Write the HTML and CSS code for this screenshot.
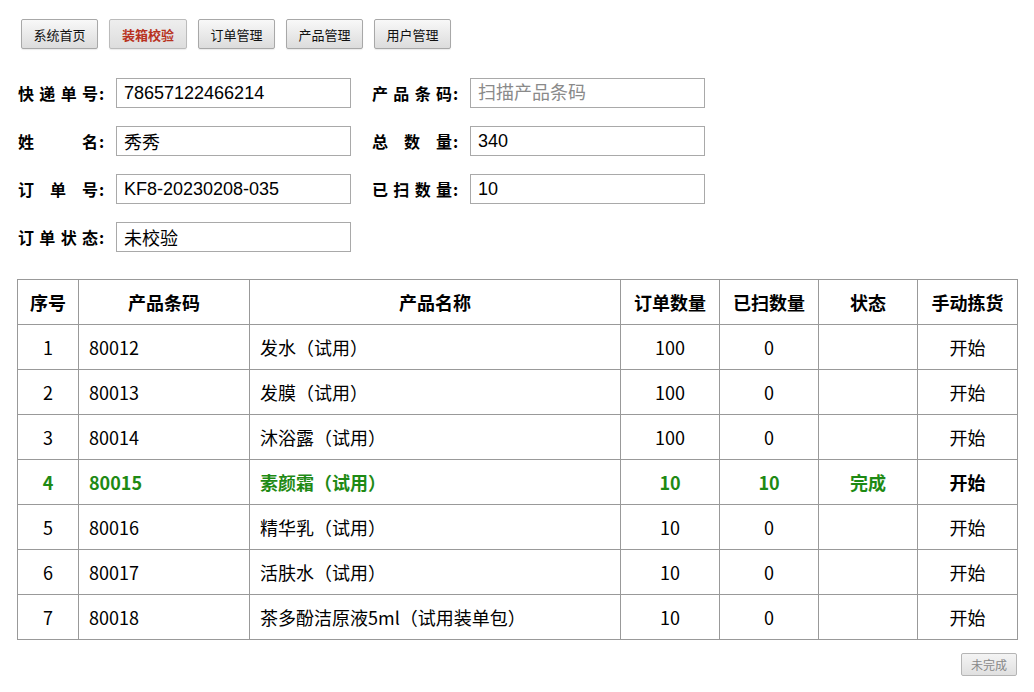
FILE: index.html
```html
<!DOCTYPE html>
<html lang="zh-CN">
<head>
  <meta charset="UTF-8">
  <title>装箱校验</title>
  <link rel="stylesheet" href="styles.css">
</head>
<body>
  <div class="nav">
    <button class="nav-btn">系统首页</button>
    <button class="nav-btn active">装箱校验</button>
    <button class="nav-btn">订单管理</button>
    <button class="nav-btn">产品管理</button>
    <button class="nav-btn">用户管理</button>
  </div>

  <div class="form">
    <div class="form-col">
      <div class="field">
        <span class="label"><span class="label-text">快递单号</span>:</span>
        <input class="input" type="text" value="78657122466214">
      </div>
      <div class="field">
        <span class="label"><span class="label-text">姓名</span>:</span>
        <input class="input" type="text" value="秀秀">
      </div>
      <div class="field">
        <span class="label"><span class="label-text">订单号</span>:</span>
        <input class="input" type="text" value="KF8-20230208-035">
      </div>
      <div class="field">
        <span class="label"><span class="label-text">订单状态</span>:</span>
        <input class="input" type="text" value="未校验">
      </div>
    </div>
    <div class="form-col">
      <div class="field">
        <span class="label"><span class="label-text">产品条码</span>:</span>
        <input class="input" type="text" placeholder="扫描产品条码">
      </div>
      <div class="field">
        <span class="label"><span class="label-text">总数量</span>:</span>
        <input class="input" type="text" value="340">
      </div>
      <div class="field">
        <span class="label"><span class="label-text">已扫数量</span>:</span>
        <input class="input" type="text" value="10">
      </div>
    </div>
  </div>

  <table class="list">
    <thead>
      <tr>
        <th class="c-no">序号</th>
        <th class="c-code">产品条码</th>
        <th class="c-name">产品名称</th>
        <th class="c-num">订单数量</th>
        <th class="c-num">已扫数量</th>
        <th class="c-num">状态</th>
        <th class="c-op">手动拣货</th>
      </tr>
    </thead>
    <tbody>
      <tr>
        <td class="c-no">1</td><td class="c-code">80012</td><td class="c-name">发水（试用）</td>
        <td class="c-num">100</td><td class="c-num">0</td><td class="c-num"></td><td class="c-op">开始</td>
      </tr>
      <tr>
        <td class="c-no">2</td><td class="c-code">80013</td><td class="c-name">发膜（试用）</td>
        <td class="c-num">100</td><td class="c-num">0</td><td class="c-num"></td><td class="c-op">开始</td>
      </tr>
      <tr>
        <td class="c-no">3</td><td class="c-code">80014</td><td class="c-name">沐浴露（试用）</td>
        <td class="c-num">100</td><td class="c-num">0</td><td class="c-num"></td><td class="c-op">开始</td>
      </tr>
      <tr class="done">
        <td class="c-no">4</td><td class="c-code">80015</td><td class="c-name">素颜霜（试用）</td>
        <td class="c-num">10</td><td class="c-num">10</td><td class="c-num">完成</td><td class="c-op">开始</td>
      </tr>
      <tr>
        <td class="c-no">5</td><td class="c-code">80016</td><td class="c-name">精华乳（试用）</td>
        <td class="c-num">10</td><td class="c-num">0</td><td class="c-num"></td><td class="c-op">开始</td>
      </tr>
      <tr>
        <td class="c-no">6</td><td class="c-code">80017</td><td class="c-name">活肤水（试用）</td>
        <td class="c-num">10</td><td class="c-num">0</td><td class="c-num"></td><td class="c-op">开始</td>
      </tr>
      <tr>
        <td class="c-no">7</td><td class="c-code">80018</td><td class="c-name">茶多酚洁原液5ml（试用装单包）</td>
        <td class="c-num">10</td><td class="c-num">0</td><td class="c-num"></td><td class="c-op">开始</td>
      </tr>
    </tbody>
  </table>

  <div class="footer">
    <button class="finish-btn" disabled>未完成</button>
  </div>
</body>
</html>
```

FILE: styles.css
```css
body {
  margin: 0;
  padding: 19px 17px 0 17px;
  font-family: "Liberation Sans", "Noto Sans CJK SC", sans-serif;
  color: #000;
  background-color: #fff;
}

/* top menu */
.nav {
  display: flex;
  gap: 11px;
  padding-left: 4px;
}

.nav-btn {
  width: 77px;
  height: 30px;
  padding: 0;
  font-family: "Noto Sans CJK SC", sans-serif;
  font-size: 13px;
  color: #111;
  background: linear-gradient(#f8f8f8, #dcdcdc);
  border: 1px solid #a8a8a8;
  border-radius: 2px;
  box-shadow: 0 1px 1px rgba(0, 0, 0, 0.08);
}

.nav-btn.active {
  width: 78px;
  color: #b8321e;
  font-weight: bold;
  background: linear-gradient(#eeeeee, #dddddd);
  border-color: #bbb;
}

/* order info */
.form {
  display: flex;
  gap: 21px;
  margin-top: 29px;
  padding-left: 1px;
}

.form-col {
  display: flex;
  flex-direction: column;
  gap: 18px;
}

.field {
  display: flex;
  align-items: center;
  height: 30px;
}

.label {
  display: flex;
  width: 98px;
  font-family: "Noto Sans CJK SC", sans-serif;
  font-size: 16px;
  font-weight: bold;
}

.label-text {
  width: 80px;
  margin-right: 1px;
  text-align-last: justify;
}

.input {
  width: 235px;
  height: 30px;
  box-sizing: border-box;
  padding: 0 7px;
  font-family: "Liberation Sans", "Noto Sans CJK SC", sans-serif;
  font-size: 18px;
  color: #000;
  border: 1px solid #a9a9a9;
  outline: none;
}

.input::placeholder {
  color: #8a8a8a;
}

/* product list */
.list {
  width: 1000px;
  margin-top: 27px;
  border-collapse: collapse;
  font-family: "Noto Sans CJK SC", sans-serif;
  font-size: 18px;
  table-layout: fixed;
}

.list th,
.list td {
  height: 44px;
  padding: 0;
  border: 1px solid #999;
  text-align: center;
}

.list th {
  font-weight: bold;
}

.list th.c-no { width: 60px; }
.list th.c-code { width: 170px; }
.list th.c-name { width: 370px; }
.list th.c-num { width: 98px; }
.list th.c-op { width: 99px; }

.list td.c-code,
.list td.c-name {
  text-align: left;
  padding-left: 10px;
}

.list tr.done td {
  color: #1e8a14;
  font-weight: bold;
}

.list tr.done td.c-op {
  color: #000;
}

.footer {
  display: flex;
  justify-content: flex-end;
  margin-top: 13px;
}

.finish-btn {
  width: 56px;
  height: 23px;
  padding: 0;
  font-family: "Noto Sans CJK SC", sans-serif;
  font-size: 12px;
  color: #888;
  background: linear-gradient(#f4f4f4, #e0e0e0);
  border: 1px solid #b5b5b5;
  border-radius: 2px;
}
```
